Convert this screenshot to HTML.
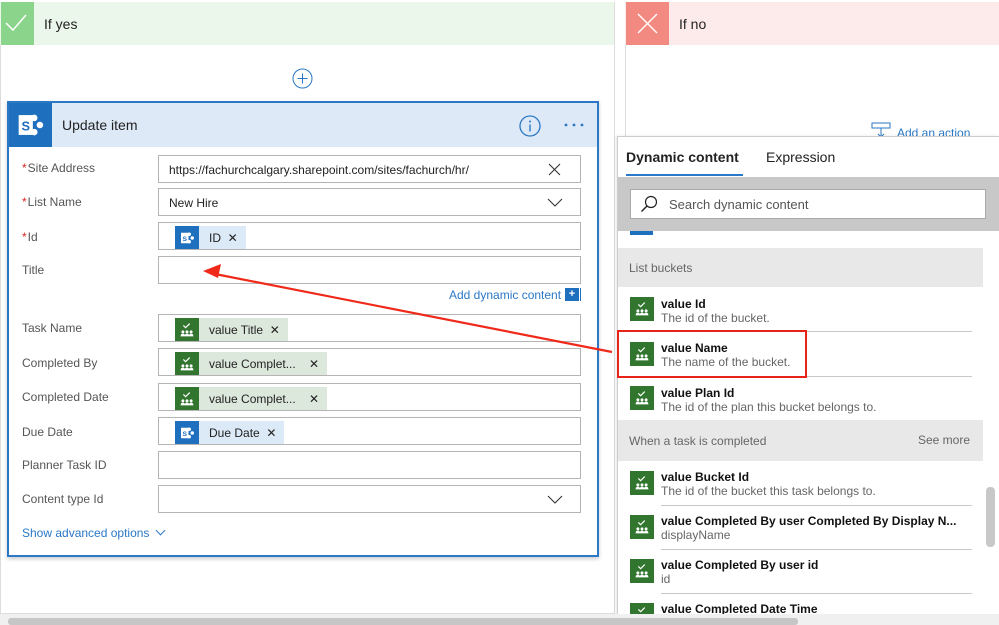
<!DOCTYPE html>
<html><head><meta charset="utf-8"><style>
*{box-sizing:border-box;margin:0;padding:0}
body{width:999px;height:625px;overflow:hidden;background:#fff;font-family:"Liberation Sans",sans-serif;position:relative;color:#222}
.a{position:absolute}
.lbl{position:absolute;left:22px;font-size:12px;color:#555}
.req{color:#d22;margin-right:1px}
.inp{position:absolute;left:158px;width:423px;height:28px;border:1px solid #b4b4b4;background:#fff;font-size:12px;color:#222}
.tok{position:absolute;left:16px;top:3px;height:23px;display:flex;align-items:center;font-size:12px}
.tok .ic{width:24px;height:23px;display:flex;align-items:center;justify-content:center}
.tok .tx{height:23px;display:flex;align-items:center;padding:0 8px 0 10px}
.g .ic{background:#31752f}.g .tx{background:#dde8dc}
.b .ic{background:#1f6fbf}.b .tx{background:#dce9f6}
.di{position:absolute;left:630px;width:24px;height:24px;background:#31752f;display:flex;align-items:center;justify-content:center;overflow:hidden}
.dt{position:absolute;left:661px;font-size:12px;font-weight:bold;color:#111;white-space:nowrap}
.dd{position:absolute;left:661px;font-size:12px;color:#666;white-space:nowrap}
.sep{position:absolute;left:661px;width:311px;height:1px;background:#c8c8c8}
</style></head><body>
<svg width="0" height="0" style="position:absolute"><defs>
<symbol id="pl" viewBox="0 0 24 24"><path d="M8 7l2.5 2.5L15 5" stroke="#fff" stroke-width="1.3" fill="none"/><circle cx="7.5" cy="14" r="1.6" fill="#fff"/><circle cx="12" cy="14" r="1.6" fill="#fff"/><circle cx="16.5" cy="14" r="1.6" fill="#fff"/><path d="M5 19c0-2 1-3 2.5-3s2.5 1 2.5 3zM9.5 19c0-2 1-3 2.5-3s2.5 1 2.5 3zM14 19c0-2 1-3 2.5-3s2.5 1 2.5 3z" fill="#fff"/></symbol>
<symbol id="sp" viewBox="0 0 24 24"><circle cx="15" cy="7" r="2.3" fill="#fff"/><circle cx="19" cy="12" r="2.3" fill="#fff"/><circle cx="15" cy="17" r="2.3" fill="#fff"/><rect x="4" y="5" width="10" height="14" fill="#fff"/><text x="9" y="16" font-size="9" font-family="Liberation Sans" font-weight="bold" fill="#1f6fbf" text-anchor="middle">S</text></symbol>
</defs></svg>

<!-- left panel -->
<div class="a" style="left:0;top:2px;width:615px;height:612px;border:1px solid #ddd;border-top:none"></div>
<div class="a" style="left:0;top:2px;width:614px;height:43px;background:#ebf7ea"></div>
<div class="a" style="left:1px;top:2px;width:33px;height:43px;background:#8bd48b"></div>
<svg class="a" style="left:4px;top:12px" width="24" height="22"><path d="M2 11l7 7L22 3" stroke="#fff" stroke-width="1.5" fill="none"/></svg>
<div class="a" style="left:44px;top:16px;font-size:14px;color:#222">If yes</div>
<svg class="a" style="left:292px;top:68px" width="21" height="21"><circle cx="10.5" cy="10.5" r="9.5" fill="#fff" stroke="#2a78c6" stroke-width="1"/><path d="M10.5 5.5v10M5.5 10.5h10" stroke="#2a78c6" stroke-width="1.1"/></svg>

<!-- right panel -->
<div class="a" style="left:625px;top:2px;width:374px;height:612px;border-left:1px solid #ddd"></div>
<div class="a" style="left:625px;top:2px;width:374px;height:43px;background:#fdeaea"></div>
<div class="a" style="left:626px;top:2px;width:43px;height:43px;background:#f28a82"></div>
<svg class="a" style="left:636px;top:12px" width="23" height="23"><path d="M2 2l19 19M21 2L2 21" stroke="#fff" stroke-width="1.4"/></svg>
<div class="a" style="left:679px;top:16px;font-size:14px;color:#222">If no</div>
<svg class="a" style="left:870px;top:122px" width="22" height="16"><path d="M2 1h18v5H2z" fill="none" stroke="#2a78c6"/><path d="M11 6v9M8 12l3 3 3-3" stroke="#2a78c6" fill="none"/></svg>
<div class="a" style="left:897px;top:126px;font-size:12px;color:#2a78c6">Add an action</div>

<!-- card -->
<div class="a" style="left:7px;top:101px;width:592px;height:456px;border:2px solid #2a78c6;background:#fff;box-shadow:0 2px 4px rgba(0,0,0,.2)"></div>
<div class="a" style="left:9px;top:103px;width:588px;height:44px;background:#dde9f6"></div>
<div class="a" style="left:9px;top:103px;width:43px;height:44px;background:#1f6fbf"></div>
<svg class="a" style="left:12px;top:108px" width="36" height="34"><use href="#sp" width="36" height="34"/></svg>
<div class="a" style="left:62px;top:117px;font-size:14px;color:#222">Update item</div>
<svg class="a" style="left:518px;top:114px" width="24" height="24"><circle cx="12" cy="12" r="10" fill="none" stroke="#2a78c6" stroke-width="1.3"/><circle cx="12" cy="7.5" r="1" fill="#2a78c6"/><path d="M12 10.5v7" stroke="#2a78c6" stroke-width="1.4"/></svg>
<svg class="a" style="left:563px;top:122px" width="22" height="6"><circle cx="3" cy="3" r="1.4" fill="#2a78c6"/><circle cx="11" cy="3" r="1.4" fill="#2a78c6"/><circle cx="19" cy="3" r="1.4" fill="#2a78c6"/></svg>

<div class="lbl" style="top:161px"><span class="req">*</span>Site Address</div>
<div class="inp" style="top:155px"><span class="a" style="left:10px;top:7px">https://fachurchcalgary.sharepoint.com/sites/fachurch/hr/</span><svg class="a" style="left:389px;top:7px" width="13" height="13"><path d="M1 1l11 11M12 1L1 12" stroke="#333" stroke-width="1.1"/></svg></div>
<div class="lbl" style="top:195px"><span class="req">*</span>List Name</div>
<div class="inp" style="top:188px"><span class="a" style="left:10px;top:7px">New Hire</span><svg class="a" style="left:388px;top:9px" width="16" height="10"><path d="M1 1l7 7 7-7" stroke="#333" stroke-width="1.1" fill="none"/></svg></div>
<div class="lbl" style="top:230px"><span class="req">*</span>Id</div>
<div class="inp" style="top:222px"><div class="tok b"><div class="ic"><svg width="20" height="18"><use href="#sp" width="20" height="18"/></svg></div><div class="tx">ID&nbsp;&nbsp;✕</div></div></div>
<div class="lbl" style="top:263px">Title</div>
<div class="inp" style="top:256px"></div>
<div class="a" style="left:449px;top:288px;font-size:12px;color:#2a78c6">Add dynamic content</div>
<div class="a" style="left:565px;top:288px;width:14px;height:13px;background:#1f6fbf;color:#fff;font-size:11px;line-height:13px;text-align:center;font-weight:bold">+</div>
<div class="a" style="left:580px;top:288px;width:1px;height:13px;background:#1f6fbf"></div>

<div class="lbl" style="top:321px">Task Name</div>
<div class="inp" style="top:314px"><div class="tok g"><div class="ic"><svg width="22" height="22"><use href="#pl" width="22" height="22"/></svg></div><div class="tx">value Title&nbsp;&nbsp;✕</div></div></div>
<div class="lbl" style="top:356px">Completed By</div>
<div class="inp" style="top:348px"><div class="tok g"><div class="ic"><svg width="22" height="22"><use href="#pl" width="22" height="22"/></svg></div><div class="tx">value Complet...&nbsp;&nbsp;&nbsp;&nbsp;✕</div></div></div>
<div class="lbl" style="top:390px">Completed Date</div>
<div class="inp" style="top:383px"><div class="tok g"><div class="ic"><svg width="22" height="22"><use href="#pl" width="22" height="22"/></svg></div><div class="tx">value Complet...&nbsp;&nbsp;&nbsp;&nbsp;✕</div></div></div>
<div class="lbl" style="top:425px">Due Date</div>
<div class="inp" style="top:417px"><div class="tok b"><div class="ic"><svg width="20" height="18"><use href="#sp" width="20" height="18"/></svg></div><div class="tx">Due Date&nbsp;&nbsp;✕</div></div></div>
<div class="lbl" style="top:458px">Planner Task ID</div>
<div class="inp" style="top:451px"></div>
<div class="lbl" style="top:492px">Content type Id</div>
<div class="inp" style="top:485px"><svg class="a" style="left:388px;top:9px" width="16" height="10"><path d="M1 1l7 7 7-7" stroke="#333" stroke-width="1.1" fill="none"/></svg></div>
<div class="a" style="left:22px;top:526px;font-size:12px;color:#2a78c6">Show advanced options <span style="display:inline-block;width:7px;height:7px;border-right:1px solid #2a78c6;border-bottom:1px solid #2a78c6;transform:rotate(45deg);margin:0 0 3px 4px"></span></div>

<!-- dynamic panel -->
<div class="a" style="left:617px;top:136px;width:382px;height:480px;background:#fff;border:1px solid #ccc;border-right:none;box-shadow:-1px 0 3px rgba(0,0,0,.1)"></div>
<div class="a" style="left:626px;top:149px;font-size:14px;font-weight:bold;color:#222">Dynamic content</div>
<div class="a" style="left:626px;top:174px;width:117px;height:2px;background:#2a78c6"></div>
<div class="a" style="left:766px;top:149px;font-size:14px;color:#222">Expression</div>
<div class="a" style="left:618px;top:177px;width:381px;height:54px;background:#c8c8c8"></div>
<div class="a" style="left:630px;top:189px;width:356px;height:30px;background:#fff;border:1px solid #aaa"></div>
<svg class="a" style="left:640px;top:195px" width="18" height="18"><circle cx="11" cy="7" r="5.5" fill="none" stroke="#222" stroke-width="1.2"/><path d="M7 11L1.5 16.5" stroke="#222" stroke-width="1.4"/></svg>
<div class="a" style="left:669px;top:197px;font-size:13px;color:#555">Search dynamic content</div>
<div class="a" style="left:630px;top:231px;width:23px;height:4px;background:#1f6fbf"></div>
<div class="a" style="left:618px;top:248px;width:365px;height:39px;background:#e8e8e8"></div>
<div class="a" style="left:629px;top:261px;font-size:12px;color:#666">List buckets</div>

<div class="di" style="top:297px"><svg width="22" height="22"><use href="#pl" width="22" height="22"/></svg></div>
<div class="dt" style="top:297px">value Id</div><div class="dd" style="top:311px">The id of the bucket.</div>
<div class="sep" style="top:331px"></div>
<div class="di" style="top:342px"><svg width="22" height="22"><use href="#pl" width="22" height="22"/></svg></div>
<div class="dt" style="top:341px">value Name</div><div class="dd" style="top:355px">The name of the bucket.</div>
<div class="sep" style="top:376px"></div>
<div class="di" style="top:386px"><svg width="22" height="22"><use href="#pl" width="22" height="22"/></svg></div>
<div class="dt" style="top:386px">value Plan Id</div><div class="dd" style="top:400px">The id of the plan this bucket belongs to.</div>
<div class="a" style="left:618px;top:420px;width:365px;height:41px;background:#e8e8e8"></div>
<div class="a" style="left:629px;top:434px;font-size:12px;color:#666">When a task is completed</div>
<div class="a" style="left:918px;top:433px;font-size:12px;color:#666">See more</div>

<div class="di" style="top:471px"><svg width="22" height="22"><use href="#pl" width="22" height="22"/></svg></div>
<div class="dt" style="top:470px">value Bucket Id</div><div class="dd" style="top:484px">The id of the bucket this task belongs to.</div>
<div class="sep" style="top:505px"></div>
<div class="di" style="top:515px"><svg width="22" height="22"><use href="#pl" width="22" height="22"/></svg></div>
<div class="dt" style="top:514px">value Completed By user Completed By Display N...</div><div class="dd" style="top:528px">displayName</div>
<div class="sep" style="top:549px"></div>
<div class="di" style="top:559px"><svg width="22" height="22"><use href="#pl" width="22" height="22"/></svg></div>
<div class="dt" style="top:558px">value Completed By user id</div><div class="dd" style="top:572px">id</div>
<div class="sep" style="top:593px"></div>
<div class="di" style="top:603px;height:11px;align-items:flex-start"><svg width="22" height="22"><use href="#pl" width="22" height="22"/></svg></div>
<div class="dt" style="top:602px">value Completed Date Time</div>
<div class="a" style="left:986px;top:487px;width:9px;height:60px;background:#c8c8c8;border-radius:4px"></div>

<!-- red box + arrow -->
<div class="a" style="left:617px;top:330px;width:190px;height:48px;border:2px solid #e8231a"></div>
<svg class="a" style="left:0;top:0" width="999" height="625"><path d="M612 352L215 274" stroke="#f02a1a" stroke-width="2.2"/><path d="M203 271l18-7-3 14z" fill="#f02a1a"/></svg>

<!-- bottom scrollbar -->
<div class="a" style="left:0;top:614px;width:999px;height:11px;background:#f0f0f0"></div>
<div class="a" style="left:8px;top:618px;width:790px;height:7px;background:#c6c6c6;border-radius:3px"></div>
</body></html>
